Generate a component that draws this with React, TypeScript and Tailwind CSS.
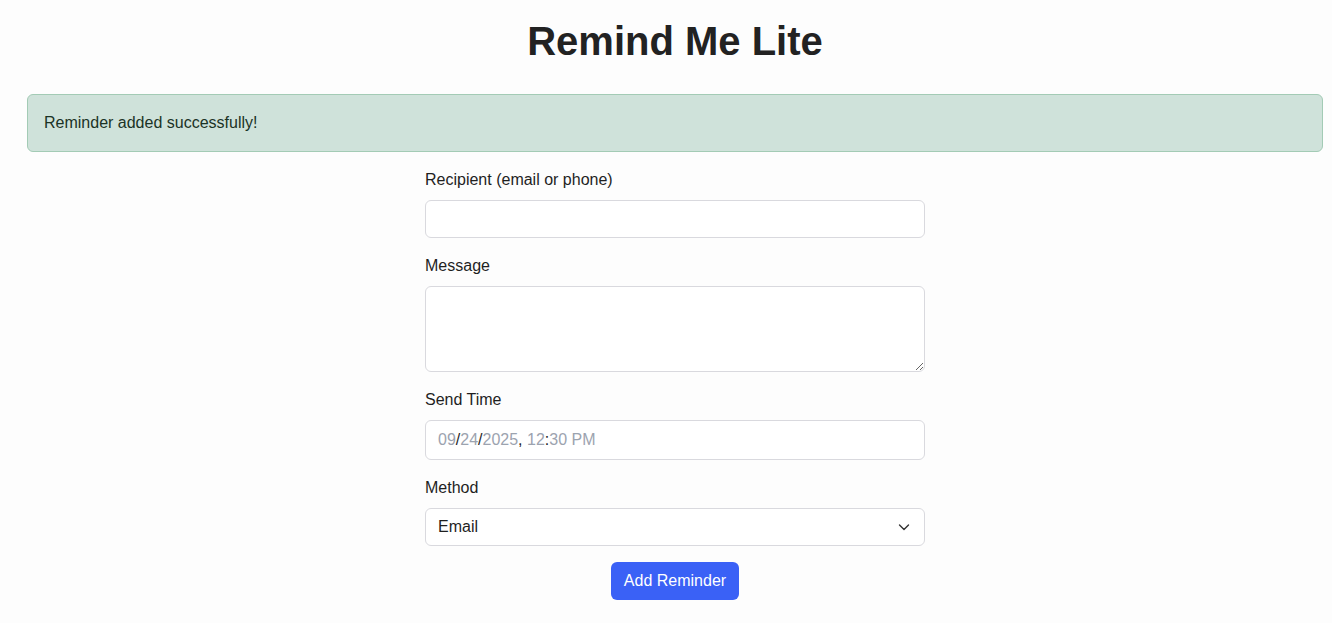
import React from "react";

export default function App() {
  const font = { fontFamily: '"Liberation Sans", Arial, sans-serif' };
  return (
    <div className="min-h-screen bg-[#fdfdfd] text-[#1f1f1f] pl-[27px] pr-[9px] pt-[17px]" style={font}>
      <h1 className="text-center text-[40px] leading-[48px] font-bold text-[#222] mb-[29px]">Remind Me Lite</h1>
      <div className="rounded-[6px] border border-[#a3cbb5] bg-[#cfe2da] px-4 py-4 text-base leading-6 text-[#1b3326]">
        Reminder added successfully!
      </div>
      <form className="mx-auto mt-4 w-[500px] flex flex-col" onSubmit={(e) => e.preventDefault()}>
        <label className="text-base leading-6 mb-2">Recipient (email or phone)</label>
        <input className="h-[38px] w-full rounded-[6px] border border-[#d9d9de] bg-white px-3 text-base outline-none mb-4" />
        <label className="text-base leading-6 mb-2">Message</label>
        <textarea className="h-[86px] w-full rounded-[6px] border border-[#d9d9de] bg-white px-3 py-1.5 text-base outline-none mb-4" />
        <label className="text-base leading-6 mb-2">Send Time</label>
        <div className="h-[40px] w-full rounded-[6px] border border-[#d9d9de] bg-white px-3 flex items-center text-base mb-4">
          <span className="text-[#9ca3af]">09</span>
          <span className="text-[#1f1f1f]">/</span>
          <span className="text-[#9ca3af]">24</span>
          <span className="text-[#1f1f1f]">/</span>
          <span className="text-[#9ca3af]">2025</span>
          <span className="text-[#1f1f1f]">,&nbsp;</span>
          <span className="text-[#9ca3af]">12</span>
          <span className="text-[#1f1f1f]">:</span>
          <span className="text-[#9ca3af]">30&nbsp;PM</span>
        </div>
        <label className="text-base leading-6 mb-2">Method</label>
        <div className="relative mb-4">
          <select className="h-[38px] w-full appearance-none rounded-[6px] border border-[#d9d9de] bg-white px-3 text-base text-[#1f1f1f] outline-none" style={font} defaultValue="email">
            <option value="email">Email</option>
            <option value="sms">SMS</option>
          </select>
          <svg className="pointer-events-none absolute right-[15px] top-[14px]" width="12" height="10" viewBox="0 0 12 10" fill="none">
            <path d="M1.5 3 L6 7.5 L10.5 3" stroke="#333" strokeWidth="1.4" strokeLinecap="round" strokeLinejoin="round" />
          </svg>
        </div>
        <div className="flex justify-center">
          <button type="submit" className="h-[38px] rounded-[6px] bg-[#3a61f6] px-[13px] text-base text-white">Add Reminder</button>
        </div>
      </form>
    </div>
  );
}
